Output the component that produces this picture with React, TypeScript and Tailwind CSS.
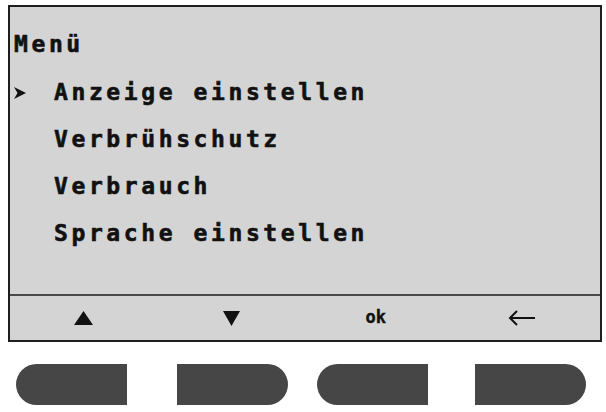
import React from "react";

const items = ["Anzeige einstellen", "Verbrühschutz", "Verbrauch", "Sprache einstellen"];

const lcdFont =
  "font-['DejaVu_Sans_Mono',monospace] font-bold text-[23px] tracking-[3.6px] text-[#111] [-webkit-text-stroke:0.6px_#111]";

const Pointer = () => (
  <svg width="12" height="12" viewBox="0 0 12 12" className="block">
    <polygon points="0,0 12,6 0,12 3.5,6" fill="#111" />
  </svg>
);

const SoftKey = ({ side, className }: { side: "left" | "right"; className: string }) => (
  <div
    className={`h-[41px] w-[111px] bg-[#464646] ${
      side === "left" ? "rounded-l-full" : "rounded-r-full"
    } ${className}`}
  />
);

export default function App() {
  return (
    <div className="w-[606px] h-[412px] bg-white pt-[5px] pl-[8px]">
      {/* Display */}
      <div className="w-[594px] h-[337px] border-2 border-[#1e1e1e] bg-[#d4d4d4] flex flex-col">
        <div className="pt-[14px] flex flex-col">
          <div className={`${lcdFont} h-[47px] leading-[46px] pl-[4px]`}>Menü</div>
          {items.map((item, i) => (
            <div key={item} className="h-[47px] flex items-center">
              <div className="w-[44px] pl-[4px] pt-[2px] flex items-center">{i === 0 && <Pointer />}</div>
              <span className={`${lcdFont} leading-[46px]`}>{item}</span>
            </div>
          ))}
        </div>
        <div className="flex-1" />
        {/* Soft key labels */}
        <div className="h-[46px] border-t-2 border-[#4a4a4a] grid grid-cols-4 items-center">
          <div className="flex justify-center">
            <svg width="19" height="14" viewBox="0 0 19 14">
              <polygon points="9.5,0 19,14 0,14" fill="#111" />
            </svg>
          </div>
          <div className="flex justify-center">
            <svg width="17" height="15" viewBox="0 0 17 15">
              <polygon points="0,0 17,0 8.5,15" fill="#111" />
            </svg>
          </div>
          <div className="flex justify-center font-['DejaVu_Sans_Mono',monospace] font-bold text-[17px] text-[#111] pr-[6px] [-webkit-text-stroke:0.4px_#111]">
            ok
          </div>
          <div className="flex justify-center pr-[8px]">
            <svg width="28" height="16" viewBox="0 0 28 16">
              <path d="M27 8H2M9 1L2 8l7 7" stroke="#111" strokeWidth="2" fill="none" />
            </svg>
          </div>
        </div>
      </div>
      {/* Hardware buttons */}
      <div className="flex mt-[22px]">
        <SoftKey side="left" className="ml-[8px]" />
        <SoftKey side="right" className="ml-[50px]" />
        <SoftKey side="left" className="ml-[29px]" />
        <SoftKey side="right" className="ml-[47px]" />
      </div>
    </div>
  );
}
